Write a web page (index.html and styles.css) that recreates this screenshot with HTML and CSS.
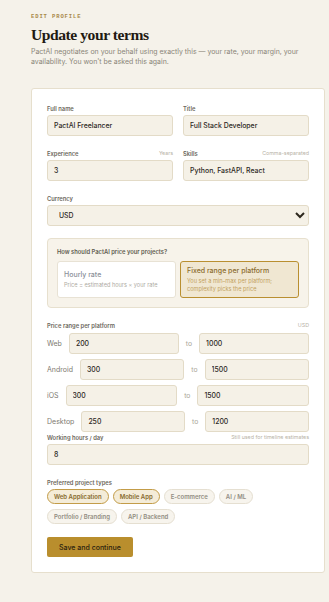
FILE: index.html
```html
<!DOCTYPE html>
<html lang="en">
<head>
<meta charset="utf-8">
<title>Edit profile</title>
<link rel="stylesheet" href="styles.css">
</head>
<body>
<main class="page">
  <div class="eyebrow">EDIT PROFILE</div>
  <h1 class="title">Update your terms</h1>
  <p class="subtitle">PactAI negotiates on your behalf using exactly this — your rate, your margin, your availability. You won't be asked this again.</p>

  <form class="card">
    <div class="grid2">
      <div class="field">
        <div class="label-row"><span class="label">Full name</span></div>
        <input class="input" value="PactAI Freelancer">
      </div>
      <div class="field">
        <div class="label-row"><span class="label">Title</span></div>
        <input class="input" value="Full Stack Developer">
      </div>
    </div>

    <div class="grid2">
      <div class="field">
        <div class="label-row"><span class="label">Experience</span><span class="hint">Years</span></div>
        <input class="input" value="3">
      </div>
      <div class="field">
        <div class="label-row"><span class="label">Skills</span><span class="hint">Comma-separated</span></div>
        <input class="input" value="Python, FastAPI, React">
      </div>
    </div>

    <div class="field">
      <div class="label-row"><span class="label">Currency</span></div>
      <select class="select"><option>USD</option></select>
    </div>

    <div class="pricing">
      <div class="pricing-q">How should PactAI price your projects?</div>
      <div class="modes">
        <div class="mode">
          <div class="mode-title">Hourly rate</div>
          <div class="mode-desc">Price = estimated hours × your rate</div>
        </div>
        <div class="mode mode-active">
          <div class="mode-title">Fixed range per platform</div>
          <div class="mode-desc">You set a min–max per platform; complexity picks the price</div>
        </div>
      </div>
    </div>

    <div class="ranges">
      <div class="label-row"><span class="label">Price range per platform</span><span class="hint">USD</span></div>
      <div class="range-rows">
        <div class="range"><span class="plat">Web</span><input class="input" value="200"><span class="to">to</span><input class="input" value="1000"></div>
        <div class="range"><span class="plat">Android</span><input class="input" value="300"><span class="to">to</span><input class="input" value="1500"></div>
        <div class="range"><span class="plat">iOS</span><input class="input" value="300"><span class="to">to</span><input class="input" value="1500"></div>
        <div class="range"><span class="plat">Desktop</span><input class="input" value="250"><span class="to">to</span><input class="input" value="1200"></div>
      </div>
      <div class="field hours">
        <div class="label-row"><span class="label">Working hours / day</span><span class="hint">Still used for timeline estimates</span></div>
        <input class="input" value="8">
      </div>
    </div>

    <div class="field">
      <div class="label-row"><span class="label">Preferred project types</span></div>
      <div class="chips">
        <span class="chip chip-on">Web Application</span>
        <span class="chip chip-on">Mobile App</span>
        <span class="chip">E-commerce</span>
        <span class="chip">AI / ML</span>
        <span class="chip">Portfolio / Branding</span>
        <span class="chip">API / Backend</span>
      </div>
    </div>

    <div class="actions">
      <button type="button" class="btn">Save and continue</button>
    </div>
  </form>
</main>
</body>
</html>
```
FILE: styles.css
```css
* { box-sizing: border-box; }
html, body { margin: 0; padding: 0; }
body {
  background: #f5f2ea;
  font-family: Inter, "Liberation Sans", sans-serif;
  color: #2b261c;
}
.page {
  padding: 13px 4px 28px 31px;
}
.eyebrow {
  font-family: "Liberation Mono", monospace;
  font-size: 5.5px;
  line-height: 8px;
  letter-spacing: 0.9px;
  font-weight: 700;
  color: #a8894a;
}
.title {
  margin: 4px 0 0;
  font-family: "Liberation Serif", serif;
  font-weight: 700;
  font-size: 15.6px;
  line-height: 20px;
  letter-spacing: -0.45px;
  color: #1f1a12;
}
.subtitle {
  margin: 2px 0 0;
  font-size: 6.95px;
  line-height: 10px;
  color: #8a8578;
}
.card {
  margin-top: 21px;
  background: #ffffff;
  border: 1px solid #e6dfcd;
  border-radius: 3px;
  padding: 15px 15px 15px 15px;
  display: flex;
  flex-direction: column;
  gap: 13px;
}
.grid2 {
  display: grid;
  grid-template-columns: 1fr 1fr;
  gap: 10px;
}
.field {
  display: flex;
  flex-direction: column;
  gap: 3px;
  min-width: 0;
}
.label-row {
  display: flex;
  justify-content: space-between;
  align-items: center;
  height: 8px;
}
.label {
  font-size: 5.8px;
  font-weight: 600;
  color: #6c675c;
}
.hint {
  font-size: 5.3px;
  color: #b7b2a6;
}
.input, .select {
  height: 21px;
  width: 100%;
  min-width: 0;
  border: 1px solid #e3dbc7;
  border-radius: 3px;
  background: #f5f1e7;
  font-family: Inter, "Liberation Sans", sans-serif;
  font-size: 6.9px;
  font-weight: 500;
  color: #2d281e;
  padding: 0 6px;
  outline: none;
}
.select {
  padding: 0 7px;
}
.pricing {
  background: #f7f3ea;
  border: 1px solid #e7e0ce;
  border-radius: 4px;
  padding: 9px;
  display: flex;
  flex-direction: column;
  gap: 5px;
  margin-top: -1px;
}
.pricing-q {
  font-size: 5.8px;
  font-weight: 600;
  line-height: 8px;
  color: #605b4f;
}
.modes {
  display: grid;
  grid-template-columns: 1fr 1fr;
  gap: 4px;
}
.mode {
  height: 37px;
  background: #ffffff;
  border: 1px solid #e8e2d4;
  border-radius: 3px;
  padding: 0 6px;
  display: flex;
  flex-direction: column;
  justify-content: center;
  gap: 2px;
}
.mode-title {
  font-size: 7px;
  font-weight: 500;
  line-height: 9px;
  color: #8a8f98;
}
.mode-desc {
  font-size: 5.6px;
  line-height: 8px;
  color: #aeaba3;
}
.mode-active {
  background: #f0e7d2;
  border-color: #b98f30;
}
.mode-active .mode-title { color: #8b6c2d; }
.mode-active .mode-desc { color: #c3a25e; }
.ranges {
  display: flex;
  flex-direction: column;
  gap: 4px;
}
.range-rows {
  display: flex;
  flex-direction: column;
  gap: 5px;
}
.range {
  display: flex;
  align-items: center;
  gap: 7px;
}
.range .input { flex: 1; width: auto; }
.plat {
  font-size: 7px;
  color: #7e7a70;
}
.to {
  font-size: 6.8px;
  color: #aaa698;
}
.hours { margin-top: -3px; }
.chips {
  display: flex;
  flex-wrap: wrap;
  gap: 5px 4px;
}
.chip {
  height: 15px;
  display: inline-flex;
  align-items: center;
  padding: 0 6px;
  border-radius: 8px;
  border: 1px solid #e5dfd1;
  background: #f7f4ed;
  font-size: 6px;
  font-weight: 600;
  color: #928d82;
}
.chip-on {
  border-color: #c39c48;
  background: #f4ecd8;
  color: #876a2c;
}
.actions { display: flex; }
.btn {
  height: 20px;
  padding: 0 12px;
  border: none;
  border-radius: 2px;
  background: #b98e2d;
  font-family: Inter, "Liberation Sans", sans-serif;
  font-size: 7px;
  font-weight: 500;
  color: #2b220f;
}
```
